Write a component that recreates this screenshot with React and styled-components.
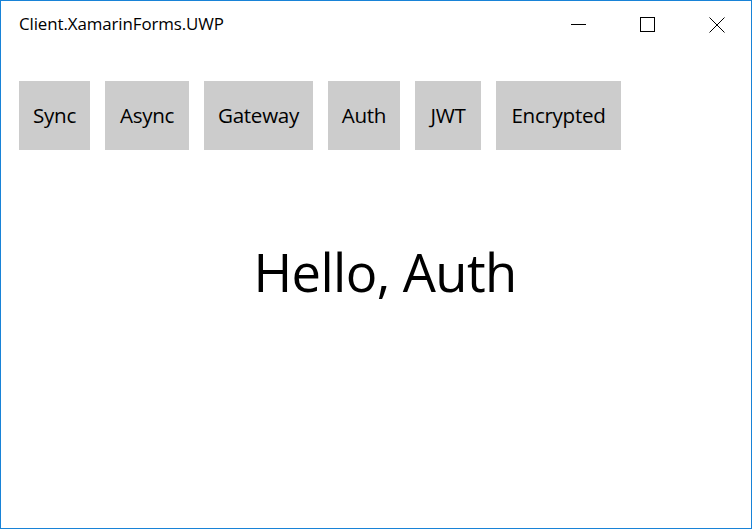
import React from 'react';
import styled, {createGlobalStyle} from 'styled-components';

const GlobalStyle = createGlobalStyle`
  html, body {
    margin: 0;
    padding: 0;
    background: #ffffff;
  }
`;

const Window = styled.div`
  box-sizing: border-box;
  width: 752px;
  height: 529px;
  border: 1px solid #1883d7;
  background: #ffffff;
  display: flex;
  flex-direction: column;
  font-family: "Open Sans", "Noto Sans", sans-serif;
  color: #000000;
  overflow: hidden;
`;

const TitleBar = styled.div`
  display: flex;
  align-items: flex-start;
  height: 47px;
`;

const Title = styled.div`
  flex: 1;
  padding: 12px 0 0 18px;
  font-size: 16.9px;
  letter-spacing: -0.1px;
  line-height: 22px;
`;

const Control = styled.div`
  width: 69px;
  height: 47px;
  display: flex;
  align-items: center;
  justify-content: center;
  box-sizing: border-box;
`;

const Content = styled.div`
  flex: 1;
  display: flex;
  flex-direction: column;
  padding: 33px 0 0 18px;
`;

const ButtonRow = styled.div`
  display: flex;
  gap: 15px;
`;

const Button = styled.div`
  height: 69px;
  width: ${({w}) => w}px;
  background: #cccccc;
  display: flex;
  align-items: center;
  justify-content: center;
  font-size: 20.6px;
  letter-spacing: -0.3px;
  padding-bottom: 1px;
  box-sizing: border-box;
`;

const Greeting = styled.div`
  margin-top: 87px;
  padding-left: 0;
  text-align: center;
  font-size: 52.5px;
  letter-spacing: -0.6px;
  line-height: 70px;
`;

const buttons = [
    {label: 'Sync', w: 71},
    {label: 'Async', w: 84},
    {label: 'Gateway', w: 109},
    {label: 'Auth', w: 72},
    {label: 'JWT', w: 66},
    {label: 'Encrypted', w: 125},
];

const App = () => {
    return (
        <Window>
            <GlobalStyle/>
            <TitleBar>
                <Title>Client.XamarinForms.UWP</Title>
                <Control>
                    <svg width="15" height="15" viewBox="0 0 15 15">
                        <line x1="0" y1="7.5" x2="15" y2="7.5" stroke="#000" strokeWidth="1"/>
                    </svg>
                </Control>
                <Control>
                    <svg width="16" height="16" viewBox="0 0 16 16">
                        <rect x="0.5" y="0.5" width="14" height="14" fill="none" stroke="#000" strokeWidth="1"/>
                    </svg>
                </Control>
                <Control>
                    <svg width="16" height="16" viewBox="0 0 16 16">
                        <path d="M0.5 0.5 L15.5 15.5 M15.5 0.5 L0.5 15.5" stroke="#000" strokeWidth="1"/>
                    </svg>
                </Control>
            </TitleBar>
            <Content>
                <ButtonRow>
                    {buttons.map(b => (
                        <Button key={b.label} w={b.w}>{b.label}</Button>
                    ))}
                </ButtonRow>
                <Greeting>Hello, Auth</Greeting>
            </Content>
        </Window>
    );
};

export default App;
